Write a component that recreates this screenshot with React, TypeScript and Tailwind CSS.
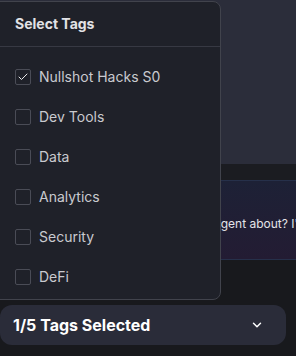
import React from 'react';
import { Check, ChevronDown } from 'lucide-react';

// Tags shown in the dropdown
const tags = [
  { id: 'nullshot', nombre: 'Nullshot Hacks S0', activo: true },
  { id: 'dev', nombre: 'Dev Tools', activo: false },
  { id: 'data', nombre: 'Data', activo: false },
  { id: 'analytics', nombre: 'Analytics', activo: false },
  { id: 'security', nombre: 'Security', activo: false },
  { id: 'defi', nombre: 'DeFi', activo: false },
];

const TagItem: React.FC<{ nombre: string; activo: boolean }> = ({ nombre, activo }) => (
  <div className="flex h-10 items-center gap-2 pl-[22px]">
    <span className="flex h-4 w-4 items-center justify-center rounded-[2px] border border-[#4a4c56]">
      {activo && <Check className="h-3 w-3 text-[#e8e8ea]" strokeWidth={2} />}
    </span>
    <span className="text-sm text-[#c9cacf]">{nombre}</span>
  </div>
);

export default function App() {
  return (
    <div
      className="relative h-[356px] w-[296px] overflow-hidden bg-[#18191d]"
      style={{ fontFamily: 'Inter, "DejaVu Sans", sans-serif' }}
    >
      {/* Background page */}
      <div className="flex flex-col">
        <div className="h-[164px] bg-[#2b2d3a]" />
        <div className="h-[16px] bg-[#1b1c21]" />
        <div className="flex h-[80px] items-start overflow-hidden border-y border-[#26304a] bg-gradient-to-b from-[#1d2136] to-[#231c33] pl-[214px] pt-[34px]">
          <span className="whitespace-nowrap text-[12px] text-[#e4e4e8]">agent about? I'd</span>
        </div>
        <div className="mt-[45px] flex h-10 w-[286px] items-center justify-between rounded-xl bg-[#2a2c39] pl-[13px] pr-[22px]">
          <span className="text-base font-bold text-white">1/5 Tags Selected</span>
          <ChevronDown className="h-[14px] w-[14px] text-white" strokeWidth={2.5} />
        </div>
      </div>

      {/* Dropdown */}
      <div className="absolute left-[-8px] top-[1px] h-[299px] w-[229px] rounded-lg border border-[#41434c] bg-[#1f2129]">
        <div className="flex h-[45px] items-center border-b border-[#373943] pl-[22px]">
          <span className="text-sm font-bold text-[#e2e2e5]">Select Tags</span>
        </div>
        <div className="pt-[10px]">
          {tags.map((tag) => (
            <TagItem key={tag.id} nombre={tag.nombre} activo={tag.activo} />
          ))}
        </div>
      </div>
    </div>
  );
}
